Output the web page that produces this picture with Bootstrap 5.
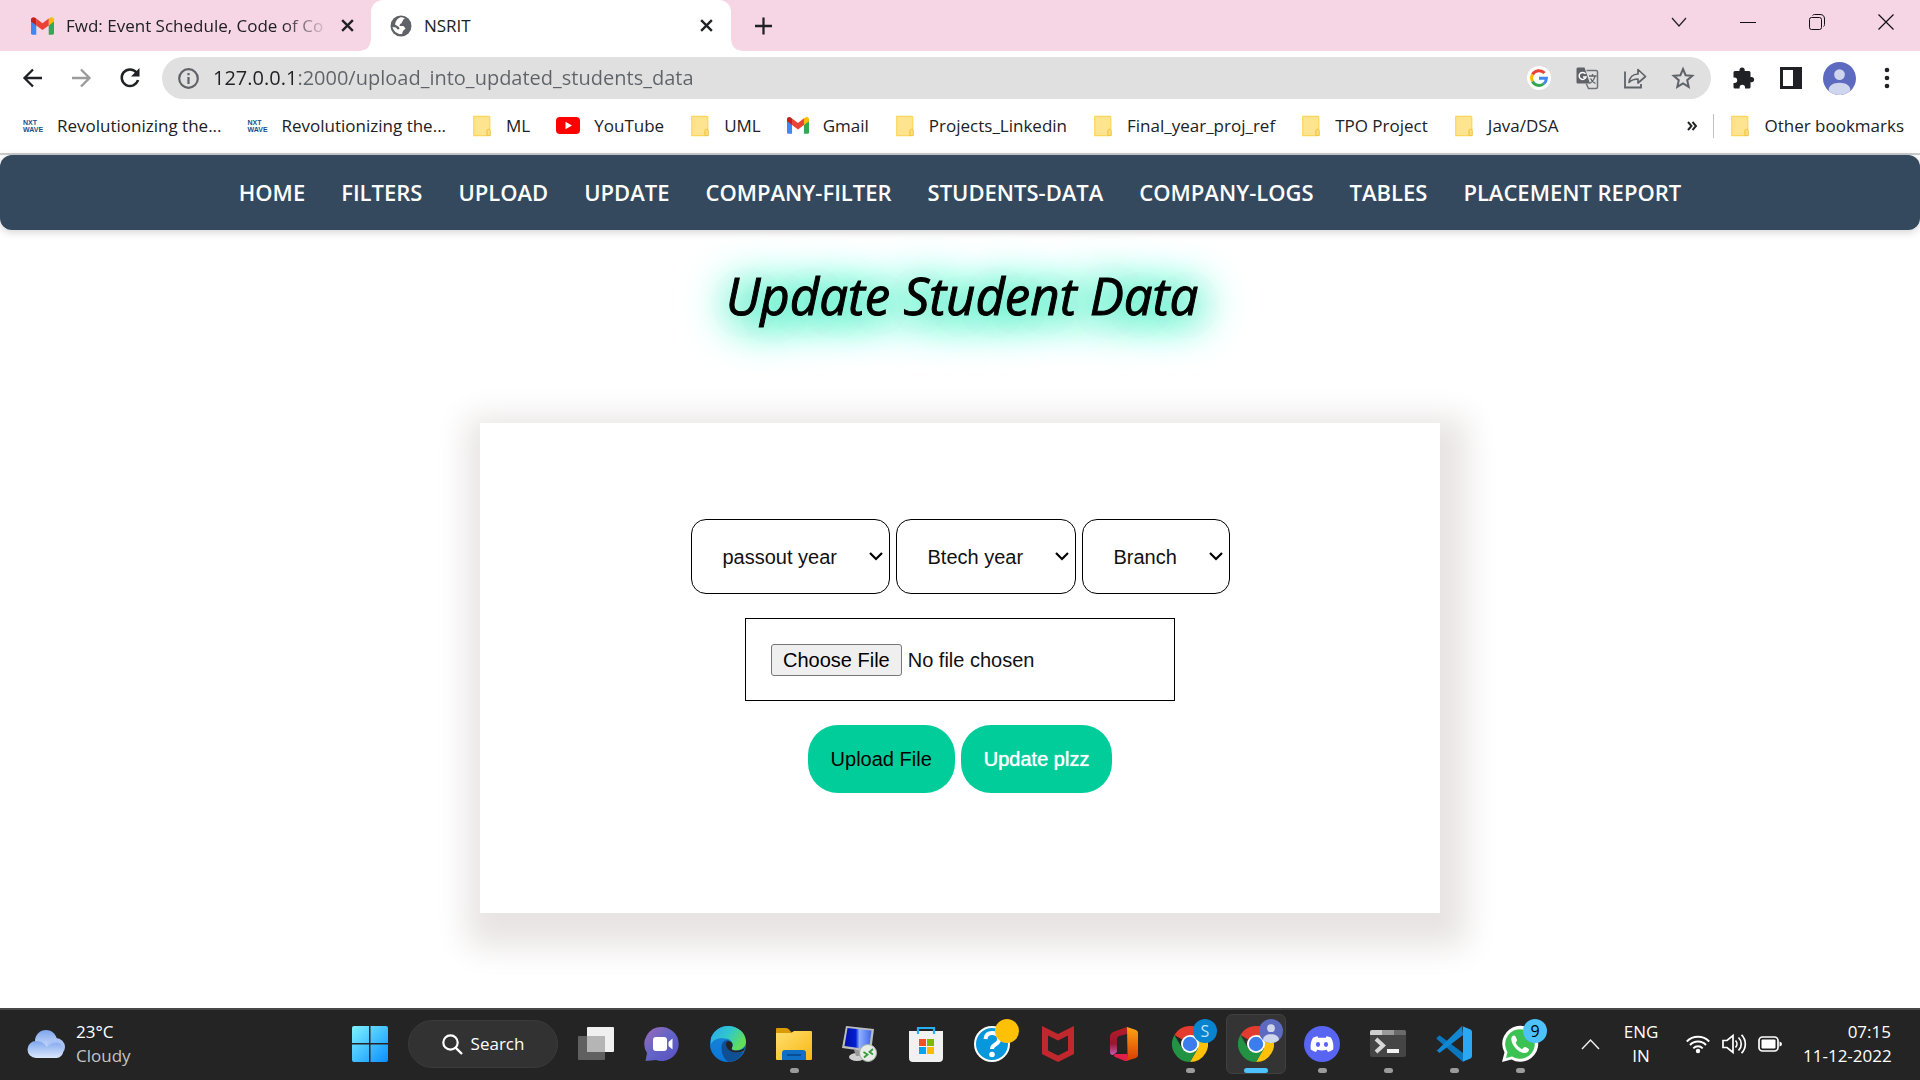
<!DOCTYPE html>
<html lang="en">
<head>
<meta charset="utf-8">
<meta name="viewport" content="width=device-width, initial-scale=1">
<title>NSRIT</title>
<link href="https://cdn.jsdelivr.net/npm/bootstrap@5.3.0/dist/css/bootstrap.min.css" rel="stylesheet">
<style>
  :root { --ui: "Open Sans", "Noto Sans", sans-serif; --form: "Liberation Sans", Arial, sans-serif; }
  body { font-family: var(--ui); background: #fff; color: #202124; }
  svg { display: block; flex: none; overflow: visible; }
  .bare { border: 0; background: none; padding: 0; color: inherit; }

  /* tab strip */
  .tab-strip { background: #f6d5e4; height: 51px; font-size: 17px; }
  .tab { width: 360px; padding: 0 17px 0 19px; position: relative; }
  .tab-first { width: 371px; padding: 0 16px 0 31px; }
  .tab-title { overflow: hidden; color: #202124; }
  .tab-fade { -webkit-mask-image: linear-gradient(90deg, #000 220px, transparent 268px); mask-image: linear-gradient(90deg, #000 220px, transparent 268px); }
  .tab-active { background: #fff; border-radius: 12px 12px 0 0; }
  .tab-active::before, .tab-active::after { content: ""; position: absolute; bottom: 0; width: 10px; height: 10px; }
  .tab-active::before { left: -10px; background: radial-gradient(circle at 0 0, transparent 9px, #fff 10px); }
  .tab-active::after { right: -10px; background: radial-gradient(circle at 100% 0, transparent 9px, #fff 10px); }
  .win-btns { gap: 53px; padding: 0 26px 8px 0; }

  /* address row */
  .tool-row { height: 54px; padding: 0 21px 0 22px; }
  .nav-keys { gap: 28px; padding-right: 21px; }
  .omnibox { background: #e0e0e0; border-radius: 21px; height: 42px; padding: 0 16px; }
  .address { border: 0; outline: 0; min-width: 0; margin: 0 14px; padding: 0; font-size: 20px;
    color: transparent; background: linear-gradient(90deg, #202124 84px, #5f6368 84px); -webkit-background-clip: text; background-clip: text; }
  .icon-row { gap: 24px; }
  .avatar { margin: 0 -5px 0 -4px; }

  /* bookmarks */
  .marks { height: 50px; padding: 0 16px 7px 23px; font-size: 17px; border-bottom: 2px solid #cbcccd; }
  .marks a { color: #202124; text-decoration: none; gap: 14px; white-space: nowrap; }
  .mark-list { gap: 26px; }
  .nxt { width: 20px; font: 700 7px/7px "Liberation Sans", sans-serif; color: #17508f; }
  .split { width: 1px; height: 24px; background: #bdc1c6; }

  /* site */
  .site-nav { background: #34495e; border-radius: 12px; min-height: 75px; padding-bottom: 2px; gap: 36px; box-shadow: 0 2px 8px rgba(0,0,0,.18); }
  .site-nav a { color: #fff; text-decoration: none; font-size: 22px; font-weight: 600; line-height: 30px; }
  .page-title { font-size: 51px; font-style: italic; font-weight: 400; line-height: 68px; color: #000; margin: 31px 0 94px; padding-left: 4px;
    -webkit-text-stroke: 1px #000; text-shadow: 2px 4px 36px #00e6ac, 2px 4px 44px #00e6ac, 2px 4px 50px #00e6ac; }
  .panel { min-height: 490px; background: #fff; padding-top: 96px; gap: 24px; box-shadow: 7px 14px 30px 20px #e8e4e3; font-family: var(--form); font-size: 20px; }
  .field-row { gap: 6px; }
  .pick { appearance: none; height: 75px; border: 1px solid #000; border-radius: 15px; padding: 0 51px 0 31px; color: #111;
    background: #fff url("data:image/svg+xml,%3Csvg xmlns='http://www.w3.org/2000/svg' viewBox='0 0 14 9'%3E%3Cpath d='M1 1l6 6 6-6' fill='none' stroke='%23000' stroke-width='2.2'/%3E%3C/svg%3E") no-repeat right 6px center / 14px 9px; }
  .file-box { width: 430px; border: 1px solid #000; padding: 25px; color: #111; line-height: 31px; height: 83px; }
  .file-box::file-selector-button { font: inherit; line-height: 26px; padding: 2px 11px; margin-right: 6px; border: 1px solid #767676; border-radius: 3px; background: #efefef; color: #000; }
  .go { height: 68px; border: 0; border-radius: 30px; background: #00cd9a; color: #000; padding: 0 23px; }
  .go-light { color: #fff; text-shadow: 0 0 1px #fff; }

  /* taskbar */
  .task-bar { background: #242424; border-top: 2px solid #484848; height: 72px; color: #fff; font-size: 17px; }
  .weather { flex: 0 0 337px; padding: 0 0 2px 28px; gap: 11px; line-height: 24px; }
  .muted { color: #c4c4c4; }
  .task-slot { width: 66px; height: 70px; padding-bottom: 2px; position: relative; display: grid; place-items: center; }
  .task-slot::after { content: ""; position: absolute; bottom: 7px; width: 9px; height: 5px; border-radius: 3px; background: transparent; }
  .task-open::after { background: #9b9b9b; }
  .task-now::before { content: ""; position: absolute; left: 3px; right: 3px; top: 4px; height: 60px; border-radius: 6px; background: #343434; border: 1px solid #404040; }
  .task-now::after { width: 24px; background: #4cc2ff; }
  .task-slot svg { position: relative; }
  .bubble { position: absolute; top: 9px; left: 36px; width: 24px; height: 24px; border-radius: 50%; font-size: 16px; line-height: 24px; text-align: center; color: #000; }
  .find { width: 150px; height: 48px; margin: 0 5px 2px; border-radius: 24px; background: #323232; border: 1px solid #3a3a3a; gap: 8px; }
  .tray { gap: 12px; padding: 0 29px 2px 0; line-height: 24px; }
  .lang { width: 50px; margin: 0 8px 0 4px; }
  .clock { width: 88px; margin-left: 9px; }
</style>
</head>
<body>
<svg width="0" height="0" class="position-absolute" aria-hidden="true">
  <defs>
    <linearGradient id="gWin" x1="0" y1="0" x2="1" y2="1"><stop offset="0" stop-color="#7df3ff"/><stop offset="1" stop-color="#0a8eff"/></linearGradient>
    <linearGradient id="gCloud" x1="0" y1="0" x2="0" y2="1"><stop offset="0" stop-color="#7fa6ee"/><stop offset="1" stop-color="#dbe8fd"/></linearGradient>
    <linearGradient id="gChat" x1="0" y1="0" x2="1" y2="1"><stop offset="0" stop-color="#9c6ab5"/><stop offset=".5" stop-color="#6264c7"/><stop offset="1" stop-color="#5a4fc0"/></linearGradient>
    <linearGradient id="gEdgeTop" x1="0" y1="0" x2="1" y2=".5"><stop offset="0" stop-color="#2aa9ee"/><stop offset=".5" stop-color="#2fc6cf"/><stop offset="1" stop-color="#62e055"/></linearGradient>
    <linearGradient id="gEdgeLow" x1="0" y1="0" x2="0" y2="1"><stop offset="0" stop-color="#1b84d0"/><stop offset="1" stop-color="#0a78dc"/></linearGradient>
    <linearGradient id="gFold" x1="0" y1="0" x2="1" y2="1"><stop offset="0" stop-color="#ffdf6e"/><stop offset="1" stop-color="#f9b714"/></linearGradient>
    <linearGradient id="gScreen" x1="0" y1="0" x2="1" y2="0"><stop offset="0" stop-color="#0010a8"/><stop offset=".42" stop-color="#0420d4"/><stop offset=".55" stop-color="#8fb0ff"/><stop offset="1" stop-color="#3f68e6"/></linearGradient>
    <linearGradient id="gOff" x1="0" y1="0" x2="0" y2="1"><stop offset="0" stop-color="#b81d24"/><stop offset=".6" stop-color="#9a1630"/><stop offset="1" stop-color="#c061b8"/></linearGradient>
    <linearGradient id="gOff2" x1="0" y1="0" x2="0" y2="1"><stop offset="0" stop-color="#ffa412"/><stop offset="1" stop-color="#d83b01"/></linearGradient>
    <symbol id="folder" viewBox="0 0 20 24"><path d="M1 1.500h16.500q1 0 1 1V16h-1q-2 0-2 2v4.500H1z" fill="#ffe48f" stroke="#fbd65a" stroke-width="1.300"/><path d="M15.500 22.500V17q0-1.500 1.700-1.500T19 17v5.500z" fill="#ffdf80" stroke="#e9c13a"/></symbol>
    <symbol id="gmail" viewBox="0 0 24 18"><path d="M0 3v13.500Q0 18 1.600 18H5.500V8z" fill="#4285f4"/><path d="M24 3v13.500q0 1.500-1.600 1.500H18.500V8z" fill="#34a853"/><path d="M18.500 1.200V8.400L24 4.300V2.200c0-2-2.300-3-3.900-1.900z" fill="#fbbc04"/><path d="M5.500 8.400V1.300L12 6.200l6.500-5v7.200L12 13.300z" fill="#ea4335"/><path d="M0 2.200v2.100l5.500 4.100V1.300L3.900.3C2.300-.9 0 .2 0 2.200z" fill="#c5221f"/></symbol>
    <symbol id="cross" viewBox="0 0 14 14"><path d="M2 2l10 10M12 2L2 12" stroke="#202124" stroke-width="2.200"/></symbol>
    <symbol id="chrome" viewBox="0 0 36 36"><path d="M18 18L2.400 9A18 18 0 0 1 33.600 9z" fill="#e33b2e"/><path d="M18 0A18 18 0 0 1 33.600 9H18z" fill="#e33b2e"/><path d="M33.600 9A18 18 0 0 1 18 36l7.800-13.500L18 9z" fill="#fdc10a"/><path d="M18 36A18 18 0 0 1 2.400 9l7.800 13.500 15.600 0z" fill="#229342"/><circle cx="18" cy="18" r="9" fill="#fff"/><circle cx="18" cy="18" r="7.200" fill="#3b7ded"/></symbol>
    <symbol id="person" viewBox="0 0 34 34"><circle cx="17" cy="17" r="17" fill="#5c6bc0"/><circle cx="17" cy="13" r="5.500" fill="#d0d5ee"/><path d="M6 30C5 25 10 21.500 17 21.500S29 25 28 30A17 17 0 0 1 6 30z" fill="#d0d5ee"/></symbol>
  </defs>
</svg>

<div class="d-flex flex-column min-vh-100">
  <header>
    <div class="tab-strip d-flex align-items-stretch">
      <div class="tab tab-first d-flex align-items-center">
        <svg width="23" height="18"><use href="#gmail"/></svg>
        <span class="tab-title tab-fade flex-grow-1 text-nowrap mx-2 ps-1">Fwd: Event Schedule, Code of Co</span>
        <button class="bare" aria-label="Close mail tab"><svg width="15" height="15"><use href="#cross"/></svg></button>
      </div>
      <div class="tab tab-active d-flex align-items-center">
        <svg width="22" height="22" viewBox="0 0 22 22"><circle cx="11" cy="11" r="10.500" fill="#5f6368"/><path d="M10 2.500c3-.5 4 .5 5 1.500l-2 1.500v2l-3 1.500-.5 2h4l2 2.500-2.500 2.500-1 3C7 19.500 3.500 16 2.500 12l3.500.5 1.500 2 2-.5-.5-2-4-2.500C5.500 6 7.500 3.500 10 2.500z" fill="#fff"/><path d="M14 3.500l3.500 2.500-3 3-3-1z" fill="#5f6368"/></svg>
        <span class="tab-title flex-grow-1 mx-2 ps-1">NSRIT</span>
        <button class="bare" aria-label="Close NSRIT tab"><svg width="15" height="15"><use href="#cross"/></svg></button>
      </div>
      <button class="bare ms-4" aria-label="New tab"><svg width="17" height="18" viewBox="0 0 18 18"><path d="M9 0v18M0 9h18" stroke="#202124" stroke-width="2.400"/></svg></button>
      <div class="win-btns d-flex align-items-center ms-auto">
        <button class="bare" aria-label="Search tabs"><svg width="16" height="16" viewBox="0 0 16 16"><path d="M1 4l7 8 7-8" fill="none" stroke="#222" stroke-width="1.200"/></svg></button>
        <button class="bare" aria-label="Minimize"><svg width="16" height="16" viewBox="0 0 16 16"><path d="M0 8.500h16" stroke="#111"/></svg></button>
        <button class="bare" aria-label="Restore"><svg width="16" height="16" viewBox="0 0 16 16"><rect x=".5" y="3.500" width="12" height="12" rx="2" fill="none" stroke="#111"/><path d="M3.500 1.500Q4 .5 5.500.5H11q4.500 0 4.500 4.500v5.500q0 1.500-1 2" fill="none" stroke="#111"/></svg></button>
        <button class="bare" aria-label="Close window"><svg width="16" height="16" viewBox="0 0 16 16"><path d="M.5.5l15 15M15.500.5l-15 15" stroke="#111" stroke-width="1.200"/></svg></button>
      </div>
    </div>

    <div class="tool-row d-flex align-items-center">
      <div class="nav-keys d-flex">
        <button class="bare" aria-label="Back"><svg width="21" height="20" viewBox="0 0 21 20"><path d="M20 10H2.500M11 1.500L2.500 10l8.500 8.500" fill="none" stroke="#202124" stroke-width="2.300"/></svg></button>
        <button class="bare" aria-label="Forward"><svg width="21" height="20" viewBox="0 0 21 20"><path d="M1 10h17.500M10 1.500l8.500 8.500-8.500 8.500" fill="none" stroke="#9b9b9b" stroke-width="2.300"/></svg></button>
        <button class="bare" aria-label="Reload"><svg width="21" height="20" viewBox="0 0 21 20"><path d="M16.500 4.500A8.300 8.300 0 1 0 18 12" fill="none" stroke="#202124" stroke-width="2.500"/><path d="M19.500 0v8.500H11z" fill="#202124"/></svg></button>
      </div>
      <div class="omnibox d-flex align-items-center flex-grow-1">
        <svg width="21" height="21" viewBox="0 0 21 21"><circle cx="10.500" cy="10.500" r="9.300" fill="none" stroke="#5f6368" stroke-width="2.200"/><path d="M10.500 9v7M10.500 5v2.200" stroke="#5f6368" stroke-width="2.200"/></svg>
        <input class="address flex-grow-1" type="text" aria-label="Address" value="127.0.0.1:2000/upload_into_updated_students_data">
        <div class="icon-row d-flex align-items-center">
          <svg width="24" height="24" viewBox="0 0 24 24"><circle cx="12" cy="12" r="12" fill="#fff"/><g fill="none" stroke-width="3"><path d="M17.500 7.100A7.400 7.400 0 0 0 5.500 8.500" stroke="#ea4335"/><path d="M5.500 8.500a7.400 7.400 0 0 0 0 7" stroke="#fbbc05"/><path d="M5.500 15.500a7.400 7.400 0 0 0 11.500 2" stroke="#34a853"/><path d="M17 17.500a7.400 7.400 0 0 0 2.400-5.300H12" stroke="#4285f4"/></g></svg>
          <svg width="24" height="24" viewBox="0 0 24 24"><path d="M2.500 1.500h7l5.500 16H2.500Q1.500 17.500 1.500 16V3q0-1.500 1-1.500z" fill="#5f6368"/><path d="M11.500 4.500H21q1.500 0 1.500 1.500v15q0 1.500-1.500 1.500h-7.500l-2.300-5" fill="none" stroke="#6f7377" stroke-width="1.500"/><path d="M10.500 7.800A3.500 3.500 0 1 0 11 11H8" fill="none" stroke="#fff" stroke-width="1.500"/><path d="M14 10h7.500M17.500 8v2M20 10c-.5 3-3 6-5.500 7.500M15.500 12.500c1 2 3 4 5 5" fill="none" stroke="#5f6368" stroke-width="1.300"/></svg>
          <svg width="24" height="24" viewBox="0 0 24 24"><path d="M2 5.500V21.500H18V18" fill="none" stroke="#5f6368" stroke-width="1.800"/><path d="M6 16.500c.5-5 4-8.500 9-8.500V3.500l7.500 7-7.500 6.500V13c-4 0-6.500 1-9 3.500z" fill="none" stroke="#5f6368" stroke-width="1.700" stroke-linejoin="round"/></svg>
          <svg width="24" height="24" viewBox="0 0 24 24"><path d="M12 3l2.600 6.200 6.700.6-5.100 4.400 1.500 6.600L12 17.300l-5.700 3.500 1.500-6.600L2.700 9.800l6.700-.6z" fill="none" stroke="#5f6368" stroke-width="2"/></svg>
        </div>
      </div>
      <div class="icon-row d-flex align-items-center ps-3">
        <svg width="24" height="24" class="ms-1" viewBox="0 0 24 24"><path d="M4 5h4.500V4a2.600 2.600 0 0 1 5.200 0v1H18q1.500 0 1.500 1.500V11h1a2.600 2.600 0 0 1 0 5.200h-1V21q0 1.500-1.500 1.500h-4v-1a2.700 2.700 0 0 0-5.400 0v1H4q-1.500 0-1.500-1.500v-4h1a2.700 2.700 0 0 0 0-5.400h-1V6.500Q2.500 5 4 5z" fill="#202124"/></svg>
        <svg width="24" height="24" viewBox="0 0 24 24"><path fill-rule="evenodd" d="M1 1h22v22H1zM4 4v16h10V4z" fill="#202124"/></svg>
        <svg width="33" height="33" class="avatar"><use href="#person"/></svg>
        <button class="bare" aria-label="Menu"><svg width="24" height="24" viewBox="0 0 24 24"><g fill="#202124"><circle cx="12" cy="4" r="2.300"/><circle cx="12" cy="12" r="2.300"/><circle cx="12" cy="20" r="2.300"/></g></svg></button>
      </div>
    </div>

    <nav class="marks d-flex align-items-center" aria-label="Bookmarks">
      <div class="mark-list d-flex align-items-center">
        <a href="#" class="d-flex align-items-center"><span class="nxt">NXT<br>WAVE</span>Revolutionizing the...</a>
        <a href="#" class="d-flex align-items-center"><span class="nxt">NXT<br>WAVE</span>Revolutionizing the...</a>
        <a href="#" class="d-flex align-items-center"><svg width="20" height="22"><use href="#folder"/></svg>ML</a>
        <a href="#" class="d-flex align-items-center"><svg width="24" height="17" viewBox="0 0 24 17"><rect width="24" height="17" rx="4" fill="#f00"/><path d="M9.500 4.800v7.400l6.500-3.700z" fill="#fff"/></svg>YouTube</a>
        <a href="#" class="d-flex align-items-center"><svg width="20" height="22"><use href="#folder"/></svg>UML</a>
        <a href="#" class="d-flex align-items-center"><svg width="22" height="17"><use href="#gmail"/></svg>Gmail</a>
        <a href="#" class="d-flex align-items-center"><svg width="20" height="22"><use href="#folder"/></svg>Projects_Linkedin</a>
        <a href="#" class="d-flex align-items-center"><svg width="20" height="22"><use href="#folder"/></svg>Final_year_proj_ref</a>
        <a href="#" class="d-flex align-items-center"><svg width="20" height="22"><use href="#folder"/></svg>TPO Project</a>
        <a href="#" class="d-flex align-items-center"><svg width="20" height="22"><use href="#folder"/></svg>Java/DSA</a>
      </div>
      <div class="d-flex align-items-center ms-auto">
        <button class="bare me-3" aria-label="More bookmarks"><svg width="10" height="10" viewBox="0 0 10 10"><path d="M1 1l3.500 4L1 9M5.500 1L9 5 5.500 9" fill="none" stroke="#202124" stroke-width="1.900"/></svg></button>
        <span class="split me-3"></span>
        <a href="#" class="d-flex align-items-center"><svg width="20" height="22"><use href="#folder"/></svg>Other bookmarks</a>
      </div>
    </nav>
  </header>

  <main class="flex-grow-1 d-flex flex-column">
    <nav class="site-nav d-flex justify-content-center align-items-center" aria-label="Site">
      <a href="#">HOME</a><a href="#">FILTERS</a><a href="#">UPLOAD</a><a href="#">UPDATE</a><a href="#">COMPANY-FILTER</a><a href="#">STUDENTS-DATA</a><a href="#">COMPANY-LOGS</a><a href="#">TABLES</a><a href="#">PLACEMENT REPORT</a>
    </nav>
    <h1 class="page-title text-center">Update Student Data</h1>
    <form class="panel w-50 mx-auto d-flex flex-column align-items-center" onsubmit="return false">
      <div class="field-row d-flex">
        <select class="pick" aria-label="Passout year"><option>passout year</option></select>
        <select class="pick" aria-label="Btech year"><option>Btech year</option></select>
        <select class="pick" aria-label="Branch"><option>Branch</option></select>
      </div>
      <input class="file-box" type="file" aria-label="Student data file">
      <div class="field-row d-flex">
        <button class="go" type="submit">Upload File</button>
        <button class="go go-light" type="button">Update plzz</button>
      </div>
    </form>
  </main>

  <footer class="task-bar d-flex align-items-center">
    <div class="weather d-flex align-items-center">
      <svg width="37" height="28" viewBox="0 0 37 28"><circle cx="18" cy="11" r="11" fill="url(#gCloud)"/><circle cx="28" cy="17" r="9" fill="#a9c3f5"/><path d="M8 28a8 8 0 0 1 0-17c6 0 9 3 11 6 3-4 8-5 12-4a8 8 0 0 1-2 15z" fill="url(#gCloud)"/></svg>
      <div>23°C<div class="muted">Cloudy</div></div>
    </div>
    <div class="d-flex align-items-center">
      <button class="bare task-slot" aria-label="Start"><svg width="36" height="36" viewBox="0 0 36 36"><path d="M2 0h15v17H0V2Q0 0 2 0zM18.500 0H34q2 0 2 2v15H18.500zM0 18.500h17V36H2q-2 0-2-2zM18.500 18.500H36V34q0 2-2 2H18.500z" fill="url(#gWin)"/></svg></button>
      <button class="bare find d-flex align-items-center justify-content-center"><svg width="21" height="21" viewBox="0 0 21 21"><circle cx="8.500" cy="8.500" r="7.200" fill="none" stroke="#fff" stroke-width="2.200"/><path d="M13.800 13.800L20 20" stroke="#fff" stroke-width="2.400"/></svg>Search</button>
      <button class="bare task-slot" aria-label="Task view"><svg width="36" height="36" viewBox="0 0 36 36"><rect x="9" y="1" width="27" height="25" rx="1" fill="#f0f0f0"/><rect x="0" y="10" width="27" height="24" rx="1" fill="#606060"/><path d="M9 10h18v16H9z" fill="#b5b5b5"/></svg></button>
      <button class="bare task-slot" aria-label="Chat"><svg width="36" height="36" viewBox="0 0 36 36"><path d="M18.500 1A17 17 0 1 1 12 34L1.500 35 3 27A17 17 0 0 1 18.500 1z" fill="url(#gChat)"/><rect x="9" y="11" width="14" height="14" rx="3" fill="#fff"/><path d="M24.500 16l4-3.500v11l-4-3.500z" fill="#fff"/></svg></button>
      <button class="bare task-slot" aria-label="Edge"><svg width="36" height="36" viewBox="0 0 36 36"><circle cx="18" cy="18" r="18" fill="url(#gEdgeLow)"/><path d="M1 12C4 4 11 0 18 0c10 0 18 7 18 15.500C36 21 31 24.500 26 24.500c-4 0-5-1.500-4-3 2-4-1-9-7-9-5-1-11 0-14 5.500z" fill="url(#gEdgeTop)"/><path d="M11.500 22c0-5 2.500-8.500 7.500-7.500-2 1-3 3-2 5.500 1.500 5 9 8 16.500 5.500-2 5-8 10-15 10.500-4-2-7-8-7-14z" fill="#104f94"/><path d="M18 15c-4 2-2 9 5 11 4 1 8 .5 11-1.500L36 18c-1 5-5 6.500-10 6.500-4 0-5-1.500-4-3 1.500-3 .5-6-4-6.500z" fill="#242424"/></svg></button>
      <button class="bare task-slot task-open" aria-label="File Explorer"><svg width="36" height="36" viewBox="0 0 36 36"><path d="M0 3q0-1 1-1h9q2 0 3 1.500L16 7H0z" fill="#dc9a06"/><path d="M0 7h15l3-2h17q1 0 1 1v27q0 1-1 1H1q-1 0-1-1z" fill="url(#gFold)"/><path d="M6 34v-7q0-3 3-3h18q3 0 3 3v7z" fill="#0f6fc4"/><path d="M11 29h14" stroke="#0a4a90" stroke-width="1.800"/></svg></button>
      <button class="bare task-slot" aria-label="Remote Desktop"><svg width="36" height="36" viewBox="0 0 36 36"><ellipse cx="15" cy="31" rx="8" ry="4" fill="#cfcfcf"/><path d="M12 24h9l-1 6h-6z" fill="#999"/><path d="M4 0l28 3-3 23L0 22z" fill="#bdbdbd"/><path d="M5.500 2l24 2.500-2.500 19L2.500 20z" fill="url(#gScreen)"/><circle cx="26" cy="27" r="8.500" fill="#e7ece7" stroke="#a8b0a8"/><path d="M21.500 26l4 2.500-3.500 3M31 23l-3.500 3 3.500 2.500" fill="none" stroke="#3b9b3b" stroke-width="1.800"/></svg></button>
      <button class="bare task-slot" aria-label="Store"><svg width="36" height="36" viewBox="0 0 36 36"><path d="M1 5h34v27q0 4-4 4H5q-4 0-4-4z" fill="#f1f1f1"/><path d="M10 8V2h16v6" fill="none" stroke="#26b0f0" stroke-width="2.200"/><path d="M11 13h7v7h-7z" fill="#f25022"/><path d="M19 13h7v7h-7z" fill="#7fba00"/><path d="M11 21h7v7h-7z" fill="#00a4ef"/><path d="M19 21h7v7h-7z" fill="#ffb900"/></svg></button>
      <button class="bare task-slot" aria-label="Get Help"><svg width="36" height="36" viewBox="0 0 36 36"><circle cx="18" cy="18" r="17" fill="#0797dc" stroke="#fff" stroke-width="2"/><path d="M11.500 13q.5-6 6.500-6c8 0 9 8 4 11-3 2-4 2.500-4 5" fill="none" stroke="#fff" stroke-width="4"/><circle cx="18" cy="28.500" r="2.800" fill="#fff"/></svg><span class="bubble" style="background:#ffc107"></span></button>
      <button class="bare task-slot" aria-label="McAfee"><svg width="36" height="36" viewBox="0 0 36 36"><path fill-rule="evenodd" d="M2 0l16 8 16-8v28l-16 8-16-8zM8 9.500v15l10 5 10-5v-15l-10 5z" fill="#c0282d"/></svg></button>
      <button class="bare task-slot" aria-label="Office"><svg width="36" height="36" viewBox="0 0 36 36"><path d="M21 1L7 6q-3 1.500-3 5v15q0 3 3 3l4-3V13q0-2 2-3l8-2z" fill="url(#gOff)"/><path d="M21 1l9 3q2 1 2 3v22q0 2-2 3l-10 3 1.500-6z" fill="url(#gOff2)"/><path d="M9 28h12.500v7H19L9 31q-1.500-1-1-2z" fill="#e01f4a"/></svg></button>
      <button class="bare task-slot task-open" aria-label="Chrome, profile S"><svg width="36" height="36"><use href="#chrome"/></svg><span class="bubble" style="background:#0783cf;color:#bfe3f7">S</span></button>
      <button class="bare task-slot task-now" aria-label="Chrome"><svg width="36" height="36"><use href="#chrome"/></svg><span class="bubble"><svg width="24" height="24"><use href="#person"/></svg></span></button>
      <button class="bare task-slot task-open" aria-label="Discord"><svg width="36" height="36" viewBox="0 0 36 36"><circle cx="18" cy="18" r="18" fill="#5865f2"/><path d="M13.500 10.200c-2 .3-3.500.9-4.500 1.500-2 3.300-2.800 7-2.200 11.800 1.600 1.300 3.300 2 5.200 2.500l1.300-2.200q4.700 1.300 9.400 0l1.300 2.200c1.900-.5 3.600-1.200 5.200-2.500.6-4.800-.2-8.500-2.200-11.800-1-.6-2.500-1.200-4.500-1.500l-.7 1.500h-7.600z" fill="#fff"/><ellipse cx="14" cy="18.500" rx="2.100" ry="2.400" fill="#5865f2"/><ellipse cx="22" cy="18.500" rx="2.100" ry="2.400" fill="#5865f2"/></svg></button>
      <button class="bare task-slot task-open" aria-label="Terminal"><svg width="36" height="36" viewBox="0 0 36 36"><rect y="4" width="36" height="27" rx="2" fill="#454545"/><path d="M0 9V6q0-2 2-2h10v5z" fill="#cfcfcf"/><path d="M12 4h12v5H12z" fill="#9a9a9a"/><path d="M24 4h10q2 0 2 2v3H24z" fill="#6a6a6a"/><path d="M6 13l7 6.500L6 26" fill="none" stroke="#d8d8d8" stroke-width="4"/><path d="M17 23h12v4H17z" fill="#f2f2f2"/></svg></button>
      <button class="bare task-slot task-open" aria-label="Visual Studio Code"><svg width="36" height="36" viewBox="0 0 36 36"><path d="M1 11.500l2.500-2.300L27 27v9L.8 13q-.8-.8.200-1.500z" fill="#0b76be"/><path d="M1 24.500L26 0l1 9L3.500 27 1 24.800q-1-.8 0-1.300z" fill="#1287d2"/><path d="M26 0l8.500 3.500Q36 4.200 36 6v24q0 1.800-1.500 2.500L26 36q1 0 1-1.500v-33Q27 0 26 0z" fill="#2aa8f4"/></svg></button>
      <button class="bare task-slot task-open" aria-label="WhatsApp, 9 unread"><svg width="36" height="36" viewBox="0 0 36 36"><path d="M0 36l2.500-9.500A18 18 0 1 1 9.500 33.500z" fill="#fff"/><path d="M4 32l1.500-6A14.800 14.800 0 1 1 10 30.500z" fill="#3cc153"/><path d="M12 9.500c-1.500 0-3 2-2.700 4C10 20 16 26 22 27c3 .3 5-1.500 5-3.500 0-1-3.500-2.700-4.500-2.500s-1.500 2-2.500 1.900c-2-.4-6-4.400-6.200-6.200 0-.8 1.200-1.500 1.200-2.500s-1.500-4.700-3-4.700z" fill="#fff"/></svg><span class="bubble" style="background:#4cc2ff">9</span></button>
    </div>
    <div class="tray d-flex align-items-center ms-auto">
      <button class="bare" aria-label="Show hidden icons"><svg width="19" height="12" viewBox="0 0 19 12"><path d="M1 11l8.500-9 8.500 9" fill="none" stroke="#eee" stroke-width="1.500"/></svg></button>
      <div class="lang text-center">ENG<br>IN</div>
      <svg width="24" height="24" viewBox="0 0 24 24"><g fill="none" stroke="#fff" stroke-width="1.900"><path d="M.8 9.500a15.500 15.500 0 0 1 22.400 0M4 13a11 11 0 0 1 16 0M7.300 16.300a6.500 6.500 0 0 1 9.400 0"/></g><circle cx="12" cy="19" r="2.200" fill="#fff"/></svg>
      <svg width="24" height="24" viewBox="0 0 24 24"><g fill="none" stroke="#fff" stroke-width="1.700"><path d="M1 8.500h4l6-5v17l-6-5H1zM13.500 8.500a5 5 0 0 1 0 7M16.500 5.500a9 9 0 0 1 0 13M19.500 2.800a13 13 0 0 1 0 18.400"/></g></svg>
      <svg width="24" height="24" viewBox="0 0 24 24"><rect x="1" y="5" width="19" height="14" rx="3.500" fill="none" stroke="#fff" stroke-width="1.700"/><rect x="3.500" y="7.500" width="14" height="9" rx="1" fill="#fff"/><path d="M21.500 9.500q2.500.5 2.500 2.500t-2.500 2.500z" fill="#fff"/></svg>
      <div class="clock text-end text-nowrap">07:15<br>11-12-2022</div>
    </div>
  </footer>
</div>
<script src="https://cdn.jsdelivr.net/npm/bootstrap@5.3.0/dist/js/bootstrap.bundle.min.js"></script>
</body>
</html>
